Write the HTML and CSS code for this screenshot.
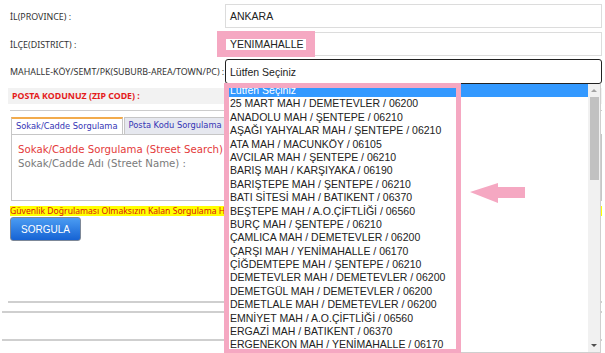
FILE: index.html
```html
<!DOCTYPE html>
<html lang="tr">
<head>
  <meta charset="UTF-8" />
  <title>Posta Kodu Sorgulama</title>
  <link rel="stylesheet" href="styles.css">
</head>
<body>
  <div class="page">
    <div class="row">
      <label>İL(PROVINCE) :</label>
      <div class="field">ANKARA</div>
    </div>
    <div class="row">
      <label>İLÇE(DISTRICT) :</label>
      <div class="field district">
        YENİMAHALLE
        <span class="mark mark-district"></span>
      </div>
    </div>
    <div class="row row-select">
      <label>MAHALLE-KÖY/SEMT/PK(SUBURB-AREA/TOWN/PC) :</label>
      <div class="field select">
        Lütfen Seçiniz
        <div class="dropdown">
          <div class="options">
            <div class="option selected">Lütfen Seçiniz</div>
            <div class="option">25 MART MAH / DEMETEVLER / 06200</div>
            <div class="option">ANADOLU MAH / ŞENTEPE / 06210</div>
            <div class="option">AŞAĞI YAHYALAR MAH / ŞENTEPE / 06210</div>
            <div class="option">ATA MAH / MACUNKÖY / 06105</div>
            <div class="option">AVCILAR MAH / ŞENTEPE / 06210</div>
            <div class="option">BARIŞ MAH / KARŞIYAKA / 06190</div>
            <div class="option">BARIŞTEPE MAH / ŞENTEPE / 06210</div>
            <div class="option">BATI SİTESİ MAH / BATIKENT / 06370</div>
            <div class="option">BEŞTEPE MAH / A.O.ÇİFTLİĞİ / 06560</div>
            <div class="option">BURÇ MAH / ŞENTEPE / 06210</div>
            <div class="option">ÇAMLICA MAH / DEMETEVLER / 06200</div>
            <div class="option">ÇARŞI MAH / YENİMAHALLE / 06170</div>
            <div class="option">ÇİĞDEMTEPE MAH / ŞENTEPE / 06210</div>
            <div class="option">DEMETEVLER MAH / DEMETEVLER / 06200</div>
            <div class="option">DEMETGÜL MAH / DEMETEVLER / 06200</div>
            <div class="option">DEMETLALE MAH / DEMETEVLER / 06200</div>
            <div class="option">EMNİYET MAH / A.O.ÇİFTLİĞİ / 06560</div>
            <div class="option">ERGAZİ MAH / BATIKENT / 06370</div>
            <div class="option">ERGENEKON MAH / YENİMAHALLE / 06170</div>
          </div>
          <div class="scrollbar">
            <span class="sb-btn sb-up"></span>
            <span class="sb-thumb"></span>
            <span class="sb-space"></span>
            <span class="sb-btn sb-down"></span>
          </div>
          <span class="mark mark-list"></span>
          <svg class="arrow" width="56" height="22" viewBox="0 0 56 22">
            <polygon points="0,9 28,0 28,4 55,4 55,15 28,15 28,20" fill="#f5a8c2" />
          </svg>
        </div>
      </div>
    </div>

    <div class="zip">POSTA KODUNUZ (ZIP CODE) :</div>
    <div class="rule"></div>

    <div class="tabs">
      <span class="tab active">Sokak/Cadde Sorgulama</span>
      <span class="tab">Posta Kodu Sorgulama</span>
    </div>
    <div class="panel">
      <p class="panel-title">Sokak/Cadde Sorgulama (Street Search)</p>
      <p class="panel-label">Sokak/Cadde Adı (Street Name) :</p>
    </div>

    <div class="notice">Güvenlik Doğrulaması Olmaksızın Kalan Sorgulama Hakkınız</div>
    <button class="btn">SORGULA</button>

    <div class="line line-short"></div>
    <div class="line line-a"></div>
    <div class="line line-b"></div>
  </div>
</body>
</html>
```

FILE: styles.css
```css
body {
  margin: 0;
  background: #fff;
  color: #333;
  font-family: "Noto Sans", sans-serif;
}
.page {
  min-height: 353px;
  box-sizing: border-box;
  padding: 4px 3px 0 0;
}
.row {
  display: grid;
  grid-template-columns: 225px 1fr;
  align-items: center;
  height: 24px;
  margin-bottom: 4px;
}
.row label {
  padding-left: 10px;
  font-size: 8.9px;
  color: #333;
  white-space: nowrap;
}
.field {
  position: relative;
  height: 24px;
  box-sizing: border-box;
  border: 1px solid #dcdcdc;
  padding-left: 4px;
  display: flex;
  align-items: center;
  font: 10.5px "Liberation Sans", Arial, sans-serif;
  color: #222;
}
.row-select {
  height: 25px;
  margin-top: -1px;
}
.select {
  height: 25px;
  border: 1px solid #222;
  border-radius: 3px;
}
.mark {
  position: absolute;
  box-sizing: border-box;
  border: 5px solid #f5a8c2;
  pointer-events: none;
}
.mark-district {
  left: -9px;
  top: -2px;
  width: 98px;
  height: 26px;
  border-width: 8px 9px 7px 9px;
}

/* open list of the select */
.dropdown {
  position: absolute;
  top: calc(100% + 1px);
  left: -1px;
  right: 0;
  height: 268px;
  display: flex;
  background: #fff;
  border: 1px solid #cfcfcf;
  border-top: none;
  z-index: 5;
}
.options {
  flex: 1;
  font: 10.5px "Liberation Sans", Arial, sans-serif;
  color: #222;
}
.option {
  height: 13.4px;
  line-height: 12.6px;
  padding-left: 4px;
  white-space: nowrap;
}
.option.selected {
  background: #3399ff;
  color: #fff;
}
.scrollbar {
  width: 12px;
  background: #f1f1f1;
  display: flex;
  flex-direction: column;
  align-items: center;
}
.sb-btn {
  height: 13px;
  width: 12px;
  position: relative;
}
.sb-btn::after {
  content: "";
  position: absolute;
  left: 3px;
  top: 5px;
  border-left: 3px solid transparent;
  border-right: 3px solid transparent;
}
.sb-up::after {
  border-bottom: 3px solid #a3a3a3;
}
.sb-down::after {
  border-top: 3px solid #505050;
}
.sb-thumb {
  width: 9px;
  height: 83px;
  background: #c1c1c1;
}
.sb-space {
  flex: 1;
}
.mark-list {
  left: -2px;
  top: -1px;
  width: 237px;
  height: 270px;
  border-bottom-width: 4px;
}
.arrow {
  position: absolute;
  left: 244px;
  top: 99px;
}

.zip {
  margin: 4px 0 0 8px;
  height: 16px;
  line-height: 16px;
  padding-left: 4px;
  background: #f2f2f2;
  color: #e41b1b;
  font-size: 8.8px;
  font-weight: bold;
}
.rule {
  margin: 6px 0 0 10px;
  border-top: 1px solid #cccccc;
}
.tabs {
  display: flex;
  gap: 1px;
  margin: 6px 0 0 11px;
  height: 17px;
}
.tab {
  box-sizing: border-box;
  height: 17px;
  padding: 0 4px;
  border: 1px solid #c6c6c6;
  border-bottom: none;
  background: #e6e8ef;
  color: #3535b5;
  font: 8.3px "DejaVu Sans", Verdana, sans-serif;
  line-height: 15px;
  white-space: nowrap;
}
.tab.active {
  background: #fff;
  border-top: 2px solid #f2ab4c;
  line-height: 14px;
}
.panel {
  margin-left: 11px;
  height: 67px;
  box-sizing: border-box;
  border: 1px solid #c6c6c6;
  padding: 8px 0 0 6px;
  font: 10.2px "DejaVu Sans", Verdana, sans-serif;
  line-height: 13.5px;
}
.panel p {
  margin: 0;
  white-space: nowrap;
}
.panel-title {
  color: #e43a3a;
}
.panel-label {
  color: #7a7a7a;
}
.notice {
  margin: 5px 0 0 10px;
  height: 10px;
  line-height: 10px;
  background: #ffff00;
  color: #d8140c;
  font-size: 8.6px;
  white-space: nowrap;
  overflow: hidden;
}
.btn {
  display: block;
  margin: 1px 0 0 10px;
  width: 71px;
  height: 24px;
  border: 1px solid #7d8898;
  border-radius: 3px;
  background: linear-gradient(#4b9cf2, #1663d4);
  color: #fff;
  font: 10px "Liberation Sans", Arial, sans-serif;
  padding: 0;
}
.line {
  border-top: 2px solid #cfcfcf;
}
.line-short {
  margin: 60px 0 0 8px;
}
.line-a {
  margin: 8px 0 0 2px;
}
.line-b {
  margin: 26px 0 0 2px;
}
```
